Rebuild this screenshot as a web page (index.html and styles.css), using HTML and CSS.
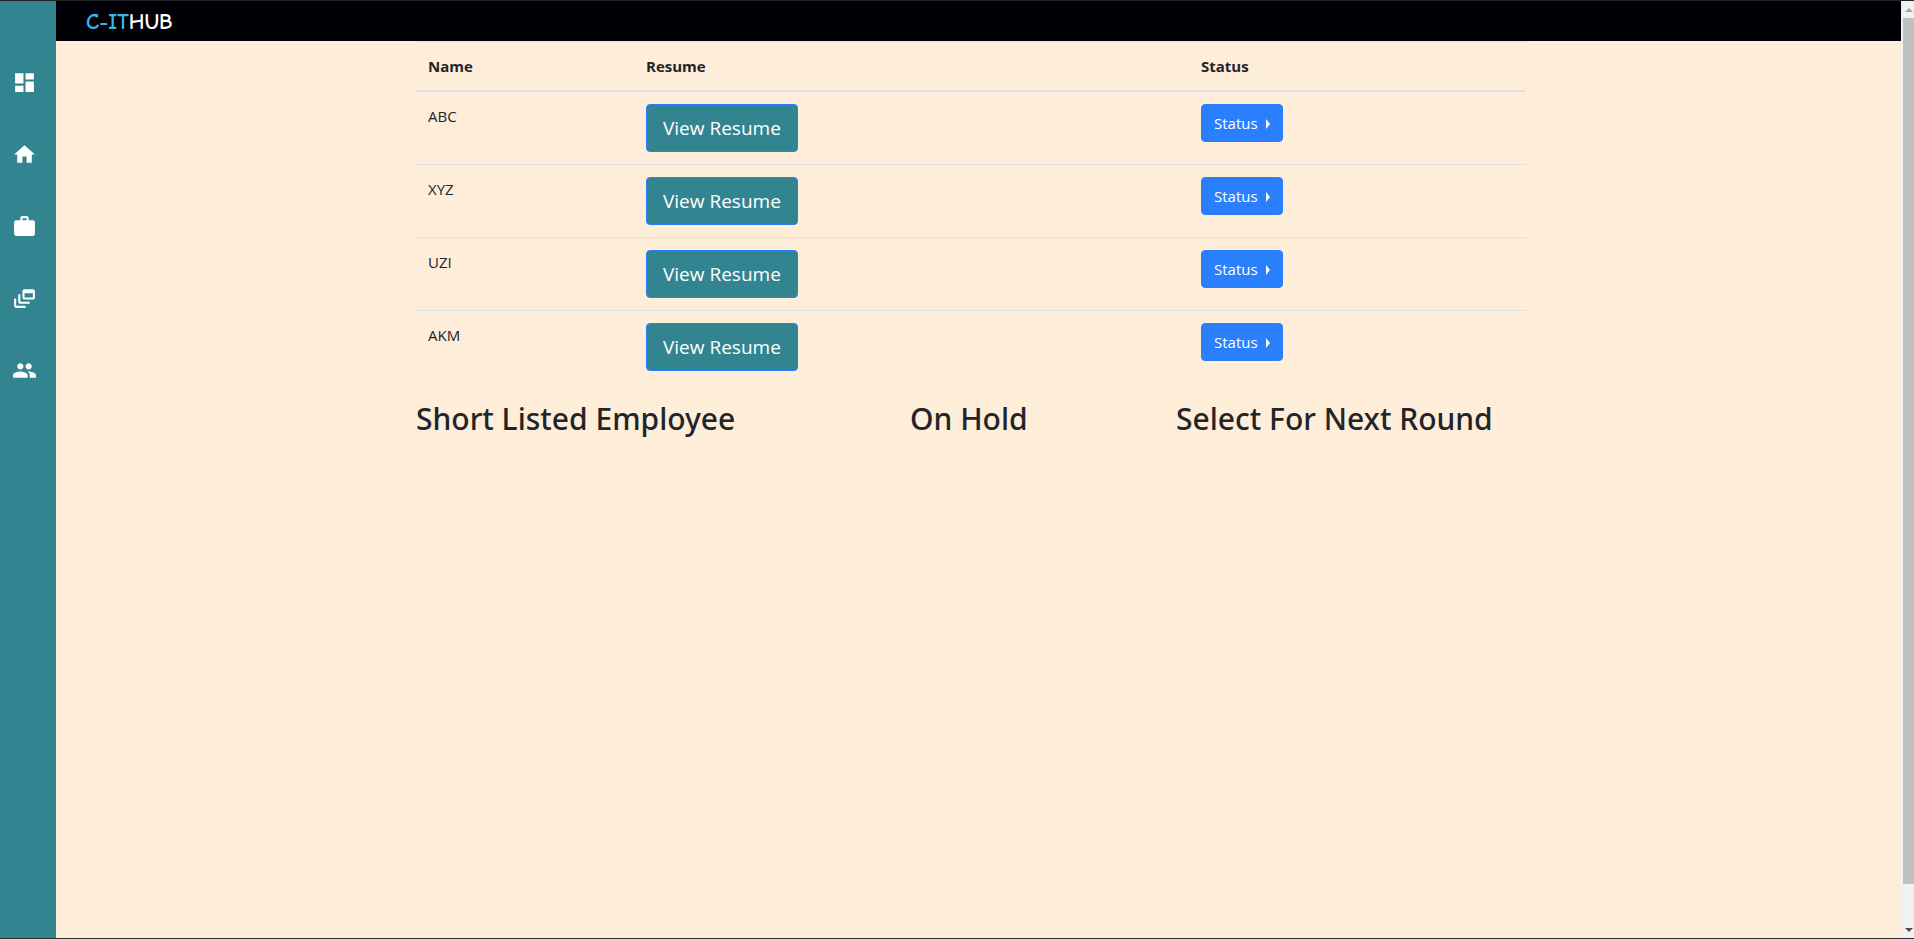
FILE: index.html
```html
<!DOCTYPE html>
<html lang="en">
<head>
<meta charset="utf-8">
<title>C-ITHUB</title>
<link rel="stylesheet" href="styles.css">
</head>
<body>
<div class="app">
  <nav class="sidebar" aria-label="Main">
    <a class="side-link" href="#" aria-label="Dashboard"><svg viewBox="0 0 24 24"><path d="M3 13h8V3H3v10zm0 8h8v-6H3v6zm10 0h8V11h-8v10zm0-18v6h8V3h-8z"/></svg></a>
    <a class="side-link" href="#" aria-label="Home"><svg viewBox="0 0 24 24"><path d="M10 20v-6h4v6h5v-8h3L12 3 2 12h3v8z"/></svg></a>
    <a class="side-link" href="#" aria-label="Jobs"><svg viewBox="0 0 24 24"><path d="M20 6h-4V4c0-1.110-.89-2-2-2h-4c-1.110 0-2 .89-2 2v2H4c-1.110 0-1.990.89-1.990 2L2 19c0 1.110.89 2 2 2h16c1.110 0 2-.89 2-2V8c0-1.110-.89-2-2-2zm-6 0h-4V4h4v2z"/></svg></a>
    <a class="side-link" href="#" aria-label="Feed"><svg viewBox="0 0 24 24"><path d="M8 8H6v7c0 1.100.9 2 2 2h9v-2H8V8zM20 3h-8c-1.100 0-2 .9-2 2v6c0 1.100.9 2 2 2h8c1.100 0 2-.9 2-2V5c0-1.100-.9-2-2-2zm0 8h-8V7h8v4zM4 12H2v7c0 1.100.9 2 2 2h9v-2H4v-7z"/></svg></a>
    <a class="side-link" href="#" aria-label="People"><svg viewBox="0 0 24 24"><path d="M16 11c1.660 0 2.990-1.340 2.990-3S17.660 5 16 5s-3 1.340-3 3 1.340 3 3 3zm-8 0c1.660 0 2.990-1.340 2.990-3S9.660 5 8 5 5 6.340 5 8s1.340 3 3 3zm0 2c-2.330 0-7 1.170-7 3.500V19h14v-2.500c0-2.330-4.670-3.500-7-3.500zm8 0c-.29 0-.62.020-.97.050 1.160.840 1.970 1.970 1.970 3.450V19h6v-2.500c0-2.330-4.670-3.500-7-3.500z"/></svg></a>
  </nav>
  <div class="page">
    <header class="topbar"><a class="brand" href="#"><span class="brand-accent">C-IT</span>HUB</a></header>
    <main class="content">
      <div class="container">
        <table class="table">
          <colgroup><col class="col-name"><col class="col-resume"><col class="col-status"></colgroup>
          <thead><tr><th scope="col">Name</th><th scope="col">Resume</th><th scope="col">Status</th></tr></thead>
          <tbody>
            <tr><td>ABC</td><td><button class="btn btn-resume" type="button">View Resume</button></td><td><button class="btn btn-status" type="button">Status</button></td></tr>
            <tr><td>XYZ</td><td><button class="btn btn-resume" type="button">View Resume</button></td><td><button class="btn btn-status" type="button">Status</button></td></tr>
            <tr><td>UZI</td><td><button class="btn btn-resume" type="button">View Resume</button></td><td><button class="btn btn-status" type="button">Status</button></td></tr>
            <tr><td>AKM</td><td><button class="btn btn-resume" type="button">View Resume</button></td><td><button class="btn btn-status" type="button">Status</button></td></tr>
          </tbody>
        </table>
        <section class="groups">
          <h2>Short Listed Employee</h2>
          <h2>On Hold</h2>
          <h2>Select For Next Round</h2>
        </section>
      </div>
    </main>
  </div>
  <div class="scrollbar" aria-hidden="true">
    <span class="arrow arrow-up"></span>
    <span class="thumb"></span>
    <span class="arrow arrow-down"></span>
  </div>
</div>
</body>
</html>
```
FILE: styles.css
```css
* { box-sizing: border-box; }

body {
  margin: 0;
  font: 400 15px/24px "Segoe UI", "Open Sans", "Noto Sans", sans-serif;
  color: #212529;
  background: #feedd9;
}

.app {
  display: flex;
  min-height: 100vh;
  border-top: 1px solid #222;
  border-bottom: 1px solid #332d2a;
}

.sidebar {
  flex: none;
  width: 56px;
  padding: 45px 8px 0 0;
  background: #338491;
}

.side-link {
  display: flex;
  height: 72px;
  align-items: center;
  justify-content: center;
}

.side-link svg {
  width: 25px;
  height: 25px;
  fill: #fff;
}

.page { flex: 1; min-width: 0; }

.topbar {
  display: flex;
  align-items: center;
  height: 40px;
  padding: 2px 30px 0;
  background: #000006;
}

.brand {
  font: 700 22px/30px "Comic Sans MS", "Comic Neue", "Open Sans", sans-serif;
  color: #fff;
  text-decoration: none;
}

.brand-accent { color: #3db5e6; }

.content { padding-right: 15px; }

.container {
  max-width: 1110px;
  margin: 0 auto;
}

.table {
  width: 100%;
  margin-bottom: 16px;
  border-collapse: collapse;
  table-layout: fixed;
}

.col-name { width: 19.64%; }
.col-resume { width: 50%; }

.table th,
.table td {
  padding: 12px;
  text-align: left;
  vertical-align: top;
  border-top: 1px solid #dee2e6;
}

.table th { font-weight: 700; }
.table thead th { border-bottom: 2px solid #dee2e6; }

.btn {
  display: block;
  color: #fff;
  font-family: inherit;
  font-weight: 400;
  border: 1px solid #2a80fc;
  border-radius: 4px;
  cursor: pointer;
}

.btn-resume {
  padding: 8px 16px;
  font-size: 19px;
  line-height: 30px;
  background: #338491;
}

.btn-status {
  padding: 6px 12px;
  font-size: 15px;
  line-height: 24px;
  background: #2a80fc;
}

.btn-status::after {
  content: "";
  display: inline-block;
  margin-left: 8px;
  border-top: 5px solid transparent;
  border-bottom: 5px solid transparent;
  border-left: 4px solid #fff;
}

.groups {
  display: grid;
  grid-template-columns: 494fr 266fr 350fr;
}

.groups h2 {
  margin: 0 0 8px;
  font-family: "Segoe UI", "Noto Sans", "Open Sans", sans-serif;
  font-size: 30px;
  line-height: 40px;
  font-weight: 500;
  white-space: nowrap;
}

.scrollbar {
  display: flex;
  flex-direction: column;
  align-items: flex-end;
  flex: none;
  width: 13px;
  background: #f1f1f1;
}

.arrow {
  display: flex;
  align-items: center;
  justify-content: center;
  width: 11px;
  height: 17px;
}

.arrow::before {
  content: "";
  border: 4px solid transparent;
}

.arrow-up::before { border-top: 0; border-bottom-color: #a3a3a3; }
.arrow-down { margin-top: auto; }
.arrow-down::before { border-bottom: 0; border-top-color: #505050; }

.thumb {
  flex: 0 0 92.4%;
  width: 11px;
  background: #c1c1c1;
}
```
